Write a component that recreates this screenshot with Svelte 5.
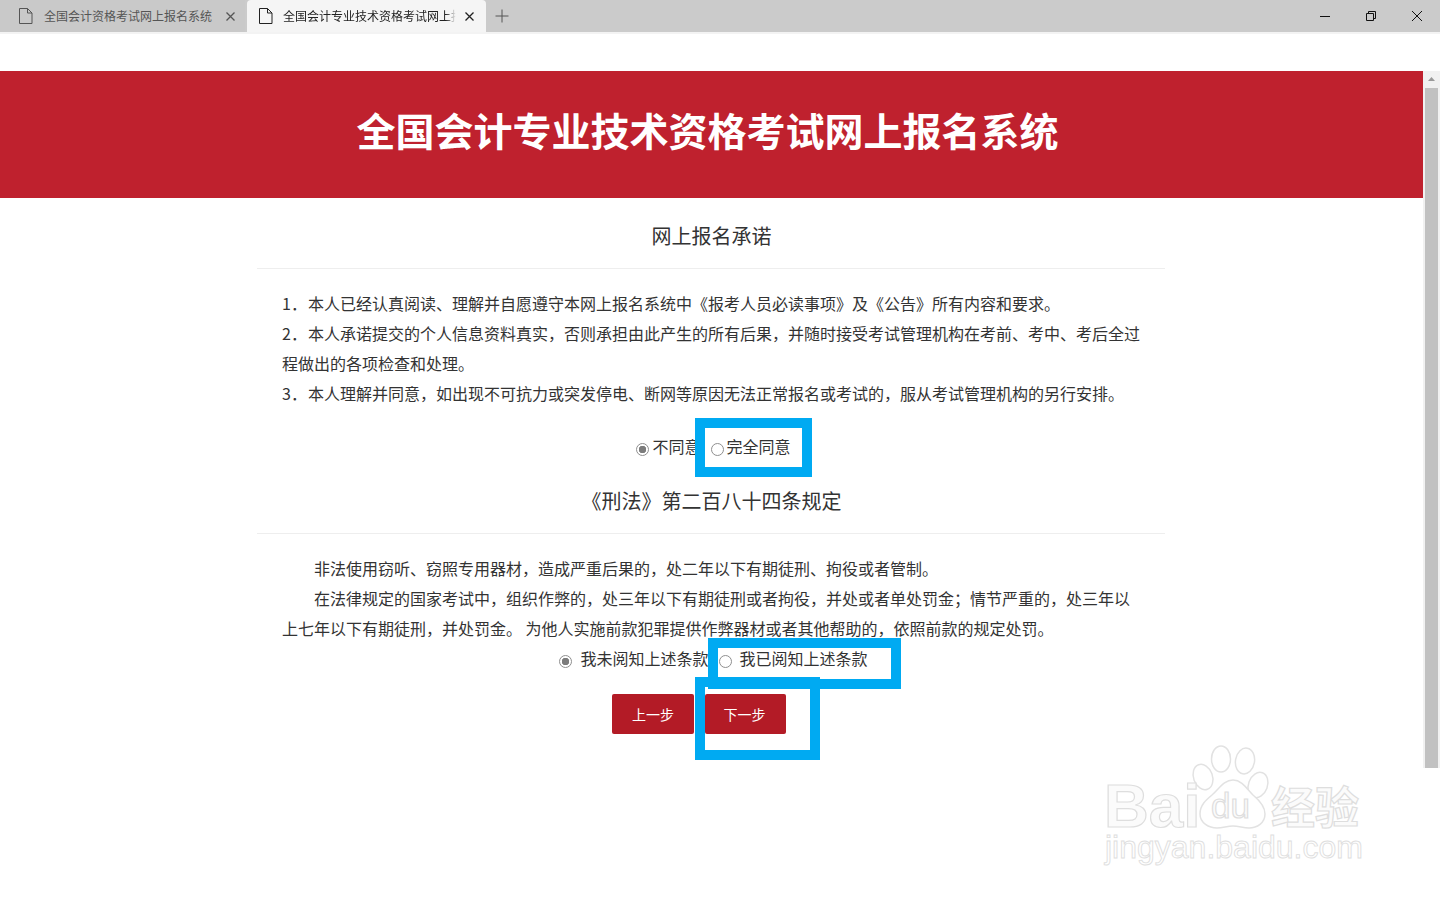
<script>
    let tabs = [
        { title: '全国会计资格考试网上报名系统', active: false },
        { title: '全国会计专业技术资格考试网上报名系统', active: true }
    ];
    let agree = $state('no');
    let read = $state('no');
</script>

<div class="window">
    <header class="tabbar">
        {#each tabs as tab}
            <div class="tab" class:active={tab.active}>
                <svg class="doc" width="14" height="16" viewBox="0 0 14 16">
                    <path d="M.5.5h8l4.500 4.500v10.500h-12.500z M8.500.5v4.500h4.500" fill="none" stroke="currentColor" />
                </svg>
                <span class="tab-title">{tab.title}</span>
                <svg class="tab-close" width="9" height="9" viewBox="0 0 9 9">
                    <path d="M.5.5l8 8M8.500.5l-8 8" stroke="currentColor" stroke-width="1.300" />
                </svg>
            </div>
        {/each}
        <svg class="plus" width="14" height="14" viewBox="0 0 14 14">
            <path d="M7 .5v13M.5 7h13" stroke="#555" stroke-width="1" />
        </svg>
        <div class="controls">
            <svg width="10" height="10" viewBox="0 0 10 10"><path d="M0 5.500h10" stroke="#111" /></svg>
            <svg width="10" height="10" viewBox="0 0 10 10">
                <path d="M.5 2.500h7v7h-7z M2.500 2.500v-2h7v7h-2" fill="none" stroke="#111" />
            </svg>
            <svg width="10" height="10" viewBox="0 0 10 10"><path d="M0 0l10 10M10 0l-10 10" stroke="#111" /></svg>
        </div>
    </header>

    <div class="gap"></div>

    <div class="viewport">
        <main class="page">
            <div class="banner"><h1>全国会计专业技术资格考试网上报名系统</h1></div>
            <div class="content">
                <h2 class="promise">网上报名承诺</h2>
                <div class="text">
                    <p><span class="num">1．</span>本人已经认真阅读、理解并自愿遵守本网上报名系统中《报考人员必读事项》及《公告》所有内容和要求。</p>
                    <p><span class="num">2．</span>本人承诺提交的个人信息资料真实，否则承担由此产生的所有后果，并随时接受考试管理机构在考前、考中、考后全过程做出的各项检查和处理。</p>
                    <p><span class="num">3．</span>本人理解并同意，如出现不可抗力或突发停电、断网等原因无法正常报名或考试的，服从考试管理机构的另行安排。</p>
                </div>
                <div class="choice first">
                    <label><input type="radio" bind:group={agree} value="no" />不同意</label>
                    <label><input type="radio" bind:group={agree} value="yes" />完全同意</label>
                </div>
                <h2 class="law-title">《刑法》第二百八十四条规定</h2>
                <div class="text">
                    <p class="indent">非法使用窃听、窃照专用器材，造成严重后果的，处二年以下有期徒刑、拘役或者管制。</p>
                    <p class="indent">在法律规定的国家考试中，组织作弊的，处三年以下有期徒刑或者拘役，并处或者单处罚金；情节严重的，处三年以上七年以下有期徒刑，并处罚金。 为他人实施前款犯罪提供作弊器材或者其他帮助的，依照前款的规定处罚。</p>
                </div>
                <div class="choice second">
                    <label><input type="radio" bind:group={read} value="no" />我未阅知上述条款</label>
                    <label><input type="radio" bind:group={read} value="yes" />我已阅知上述条款</label>
                </div>
                <div class="buttons">
                    <button>上一步</button>
                    <button class="next">下一步</button>
                </div>
            </div>
        </main>
        <div class="scrollbar">
            <svg width="7" height="4" viewBox="0 0 7 4"><path d="M3.500 0l3.500 4h-7z" fill="#999" /></svg>
            <div class="thumb"></div>
        </div>
    </div>

    <!-- blue annotation frames drawn over the screenshot -->
    <div class="frame f1"></div>
    <div class="frame f2"></div>
    <div class="frame f3"></div>

    <svg class="watermark" width="290" height="150" viewBox="0 0 290 150">
        <g class="wm-shape">
            <ellipse cx="131" cy="29" rx="9.500" ry="13" />
            <ellipse cx="155" cy="31" rx="9.500" ry="13" transform="rotate(10 155 31)" />
            <ellipse cx="113" cy="47" rx="9.500" ry="13" transform="rotate(-20 113 47)" />
            <ellipse cx="168" cy="55" rx="9.500" ry="13" transform="rotate(20 168 55)" />
            <path d="M143 50c9 0 14 9 20 15 6 5 12 11 12 19 0 9-8 14-16 14-6 0-10-2-16-2s-10 2-16 2c-8 0-17-5-17-14 0-9 6-14 12-19 7-6 12-15 21-15z" />
        </g>
        <text class="wm-text" x="14" y="97" font-size="62" font-weight="700">Bai</text>
        <text class="wm-text" x="121" y="88" font-size="35">du</text>
        <text class="wm-text cjk" x="181" y="94" font-size="44" font-weight="700">经验</text>
        <text class="wm-text thin" x="15" y="128" font-size="32">jingyan.baidu.com</text>
    </svg>
</div>

<style>
    :global(body) {
        background: #fff;
        overflow: hidden;
    }
    .window {
        position: relative;
        width: 1440px;
        height: 900px;
        overflow: hidden;
        background: #fff;
        font-family: 'Noto Sans CJK SC', sans-serif;
        color: #333;
    }
    .tabbar {
        display: flex;
        align-items: stretch;
        height: 32px;
        background: #cbcbcb;
    }
    .tab {
        display: flex;
        align-items: center;
        width: 245px;
        padding: 0 10px 0 19px;
        box-sizing: border-box;
        font-size: 12px;
        color: #555;
        background: #c9c9c9;
    }
    .tab.active {
        width: 239px;
        margin-left: 2px;
        padding: 0 12px 0 12px;
        background: #f5f5f5;
        color: #222;
        border-radius: 4px 4px 0 0;
    }
    .doc {
        flex: none;
        margin-right: 11px;
    }
    .tab.active .doc {
        margin-right: 10px;
    }
    .tab-title {
        flex: 1;
        min-width: 0;
        margin-top: -2px;
        white-space: nowrap;
        overflow: hidden;
    }
    .tab.active .tab-title {
        -webkit-mask-image: linear-gradient(to right, #000 94%, transparent);
        mask-image: linear-gradient(to right, #000 94%, transparent);
    }
    .tab-close {
        flex: none;
        margin-left: 10px;
    }
    .tab.active .tab-close {
        margin-left: 9px;
    }
    .plus {
        align-self: center;
        margin-left: 9px;
    }
    .controls {
        margin-left: auto;
        display: flex;
        align-items: center;
        gap: 36px;
        padding-right: 18px;
    }
    .gap {
        height: 39px;
        box-sizing: border-box;
        border-top: 2px solid #f3f3f3;
    }
    .viewport {
        display: flex;
        align-items: flex-start;
        height: 829px;
    }
    .page {
        flex: 1;
    }
    .banner {
        height: 127px;
        display: flex;
        align-items: center;
        justify-content: center;
        background: #bf212e;
        padding-right: 8px;
    }
    h1 {
        margin: 0 0 10px;
        font-size: 39px;
        font-weight: 700;
        line-height: 1;
        color: #fff;
    }
    .content {
        width: 908px;
        margin-left: 257px;
    }
    h2 {
        margin: 0;
        padding-left: 1px;
        text-align: center;
        font-size: 20px;
        font-weight: 400;
        color: #333;
        border-bottom: 1px solid #eee;
        box-sizing: border-box;
    }
    h2.promise {
        height: 71px;
        line-height: 76px;
    }
    h2.law-title {
        height: 70px;
        line-height: 74px;
    }
    .text {
        padding: 19px 25px 0;
        font-size: 16px;
        line-height: 30px;
    }
    p {
        margin: 0;
    }
    .num {
        margin-right: 1px;
    }
    .indent {
        text-indent: 2em;
    }
    .choice {
        display: flex;
        justify-content: center;
        gap: 10px;
        font-size: 16px;
        line-height: 30px;
        padding-left: 5px;
    }
    .choice.first {
        height: 56px;
        padding-top: 23px;
        box-sizing: border-box;
    }
    .choice.second {
        height: 30px;
    }
    label {
        display: flex;
        align-items: center;
        height: 30px;
    }
    input {
        appearance: none;
        width: 13px;
        height: 13px;
        margin: 6px 3px 0 0;
        flex: none;
        border: 1.500px solid #8f8f8f;
        border-radius: 50%;
        box-sizing: border-box;
        background: #fff;
    }
    input:checked {
        background: radial-gradient(circle, #7c7c7c 0 3.500px, #fff 4px);
    }
    .second input {
        margin-right: 8px;
    }
    .buttons {
        display: flex;
        justify-content: center;
        gap: 11px;
        padding: 21px 24px 0 0;
    }
    button {
        width: 82px;
        height: 40px;
        padding: 0;
        border: none;
        border-radius: 2px;
        background: #b31b26;
        color: #fff;
        font-family: inherit;
        font-size: 14px;
    }
    button.next {
        width: 81px;
        padding-right: 2px;
    }
    .scrollbar {
        flex: none;
        width: 17px;
        height: 697px;
        background: #f1f1f1;
        display: flex;
        flex-direction: column;
        align-items: center;
        padding-top: 6px;
        box-sizing: border-box;
    }
    .thumb {
        flex: 1;
        width: 13px;
        margin-top: 7px;
        background: #c1c1c1;
    }
    .frame {
        position: absolute;
        box-sizing: border-box;
        border: 10px solid #00aaf2;
    }
    .f1 {
        left: 695px;
        top: 418px;
        width: 117px;
        height: 59px;
    }
    .f2 {
        left: 708px;
        top: 638px;
        width: 193px;
        height: 51px;
    }
    .f3 {
        left: 695px;
        top: 677px;
        width: 125px;
        height: 83px;
    }
    .watermark {
        position: absolute;
        left: 1090px;
        top: 730px;
    }
    .wm-shape ellipse,
    .wm-shape path {
        fill: #fff;
        stroke: #e2e2e2;
        stroke-width: 1.500;
    }
    .wm-text {
        fill: #fbfbfb;
        stroke: #dedede;
        stroke-width: 1.200;
        font-family: 'Liberation Sans', sans-serif;
    }
    .wm-text.cjk {
        font-family: 'Noto Sans CJK SC', sans-serif;
    }
    .wm-text.thin {
        stroke-width: 0.900;
        fill: #fff;
    }
</style>
